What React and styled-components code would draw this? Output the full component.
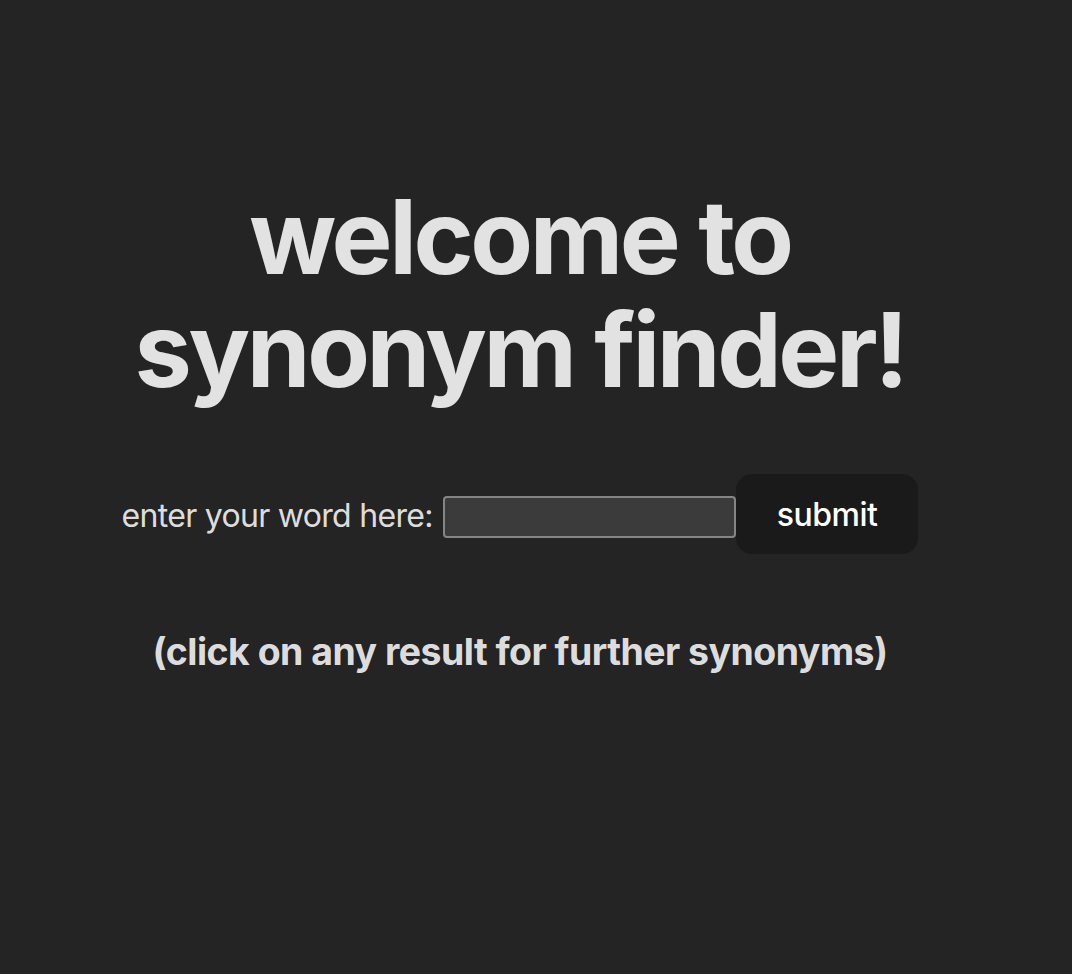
import React, { useState } from 'react'
import styled, { createGlobalStyle } from 'styled-components';

const GlobalStyle = createGlobalStyle`
  body {
    margin: 0;
    background: #242424;
    color: rgba(255, 255, 255, 0.87);
    font-family: Inter, "Noto Sans", sans-serif;
    -webkit-font-smoothing: antialiased;
  }
`;

const App = () => {
  const [word, setWord] = useState('');

  return (
    <>
      <GlobalStyle />
      <Pagina>
        <Titulo>welcome to synonym finder!</Titulo>
        <Formulario onSubmit={(e) => e.preventDefault()}>
          <Etiqueta htmlFor="word">enter your word here:</Etiqueta>
          <Campo id="word" value={word} onChange={(e) => setWord(e.target.value)} />
          <Boton type="submit">submit</Boton>
        </Formulario>
        <Pista>(click on any result for further synonyms)</Pista>
      </Pagina>
    </>
  )
}

export default App;

const Pagina = styled.main`
min-height: 100vh;
box-sizing: border-box;
padding: 181px 32px 64px 0;
display: flex;
flex-direction: column;
align-items: center;
text-align: center;
`;

const Titulo = styled.h1`
max-width: 880px;
margin: 0 0 68px;
font-size: 102.4px;
line-height: 1.1;
font-weight: 700;
letter-spacing: -3.4px;
`;

const Formulario = styled.form`
display: flex;
align-items: center;
justify-content: center;
`;

const Etiqueta = styled.label`
font-size: 32px;
line-height: 1.5;
letter-spacing: -0.7px;
margin: 3px 10px 0 0;
`;

const Campo = styled.input`
box-sizing: border-box;
width: 293px;
height: 42px;
margin-top: 6px;
background: #3b3b3b;
border: 2px solid #858585;
border-radius: 4px;
color: #fff;
font-family: inherit;
font-size: 26px;
padding: 0 6px;
outline: none;
`;

const Boton = styled.button`
box-sizing: border-box;
height: 80px;
padding: 0 39px;
border: 2px solid transparent;
border-radius: 16px;
background: #1a1a1a;
color: #fff;
font-family: inherit;
font-size: 32px;
font-weight: 500;
letter-spacing: -0.5px;
cursor: pointer;
transition: border-color .25s;
&:hover {
  border-color: #646cff;
}
`;

const Pista = styled.h3`
margin: 70px 0 0;
font-size: 37.4px;
line-height: 1.5;
font-weight: 700;
letter-spacing: -0.5px;
`;
